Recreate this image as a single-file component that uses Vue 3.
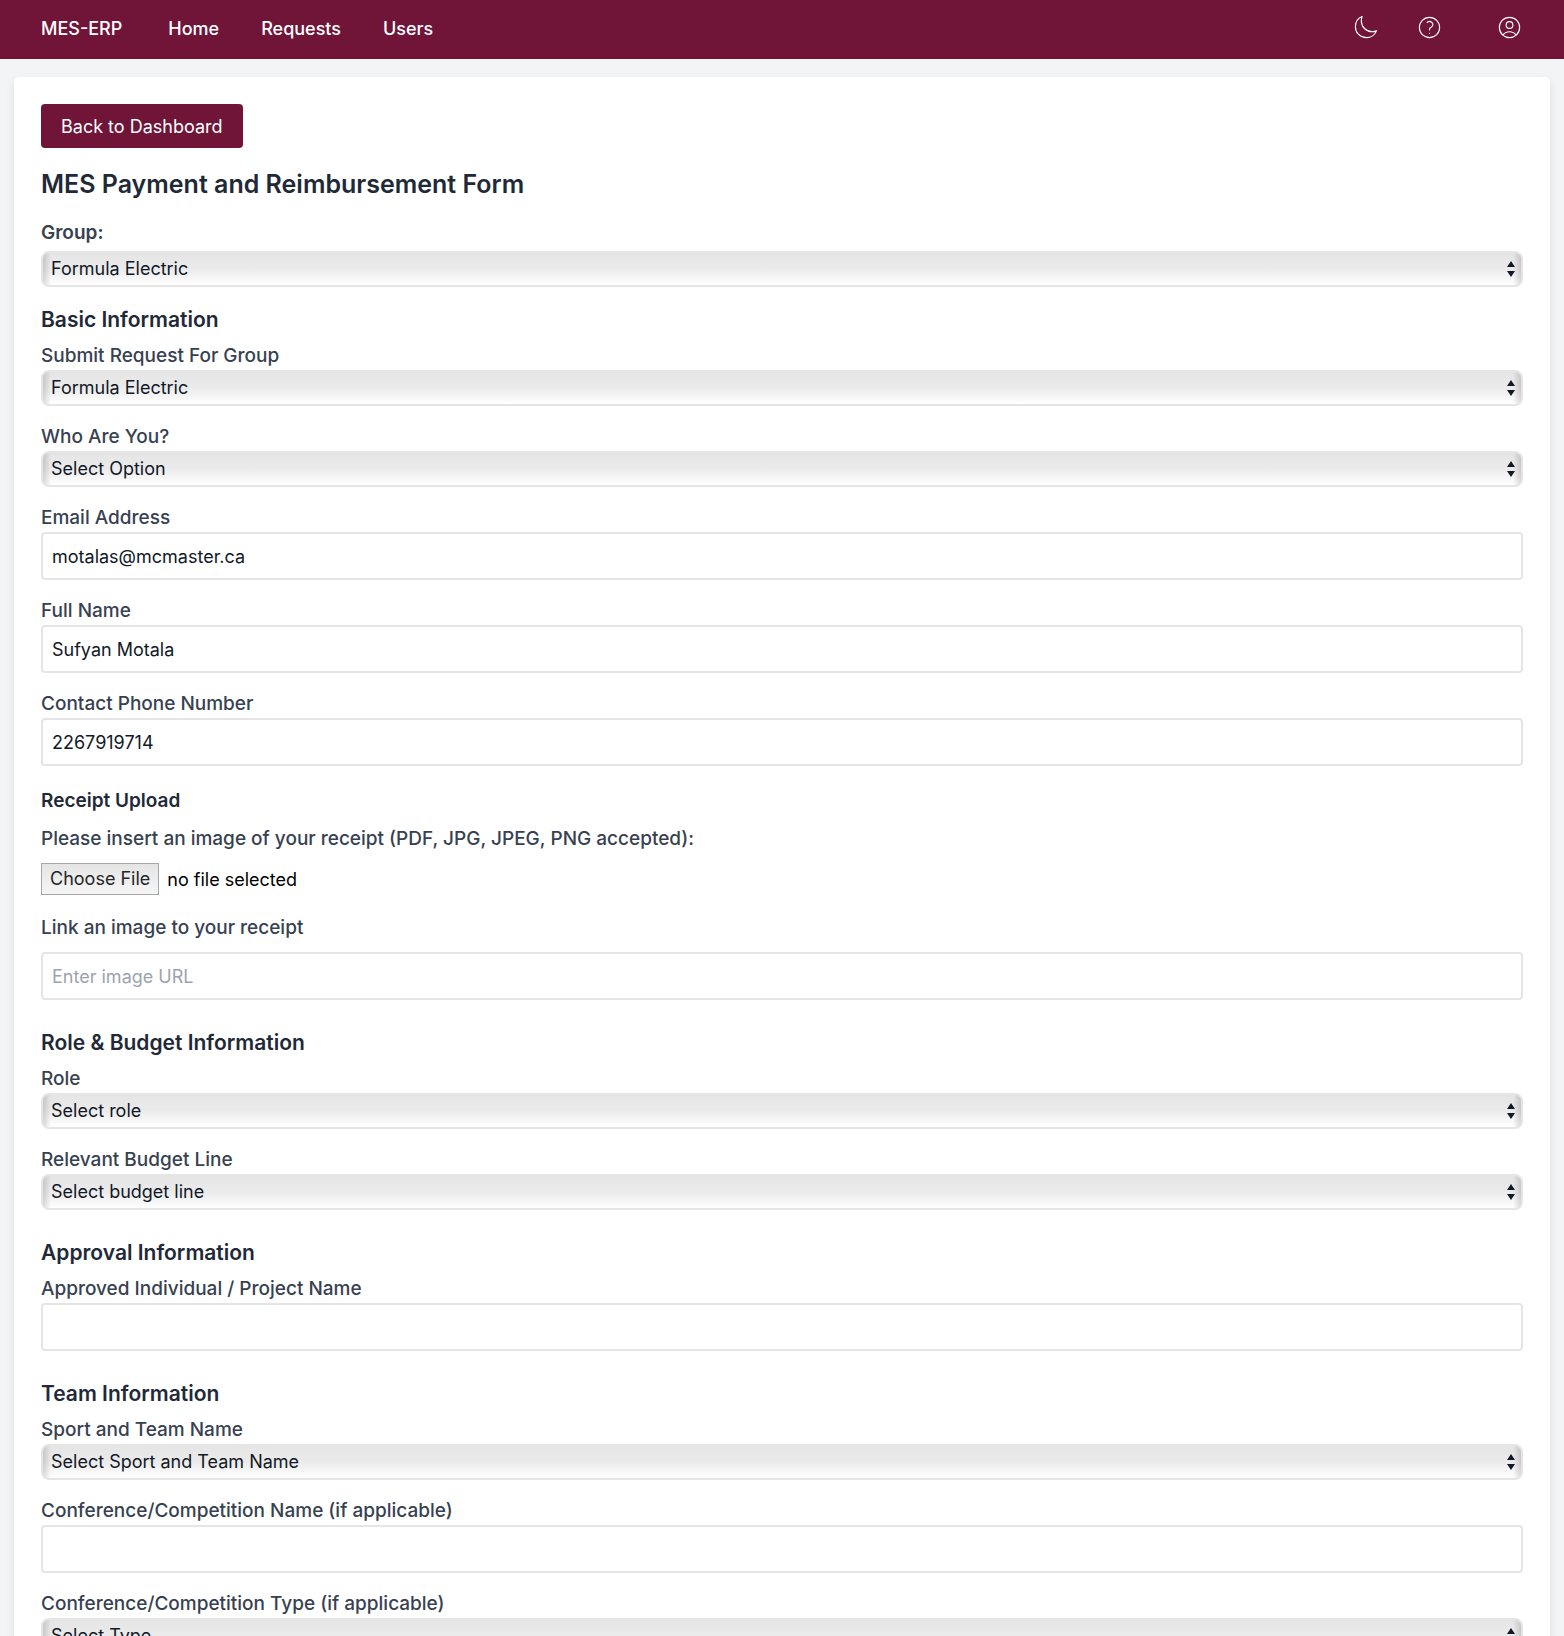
<script setup>
import { reactive } from 'vue'

const form = reactive({
  group: 'Formula Electric',
  email: 'motalas@mcmaster.ca',
  name: 'Sufyan Motala',
  phone: '2267919714',
  receiptUrl: '',
  project: '',
  conference: ''
})

const links = ['Home', 'Requests', 'Users']

const basicSelects = [
  { id: 'submit-group', label: 'Submit Request For Group', option: 'Formula Electric' },
  { id: 'who', label: 'Who Are You?', option: 'Select Option' }
]
const basicInputs = [
  { id: 'email', label: 'Email Address', type: 'email' },
  { id: 'name', label: 'Full Name', type: 'text' },
  { id: 'phone', label: 'Contact Phone Number', type: 'tel' }
]
const budgetSelects = [
  { id: 'role', label: 'Role', option: 'Select role' },
  { id: 'budget-line', label: 'Relevant Budget Line', option: 'Select budget line' }
]
</script>

<template>
  <div class="page">
    <header class="navbar">
      <nav class="nav-links">
        <a class="brand" href="#">MES-ERP</a>
        <a v-for="link in links" :key="link" href="#">{{ link }}</a>
      </nav>
      <div class="nav-actions">
        <button type="button" aria-label="Toggle dark mode">
          <svg viewBox="0 0 24 24"><path d="M21.752 15.002A9.718 9.718 0 0 1 18 15.75c-5.385 0-9.75-4.365-9.75-9.75 0-1.33.266-2.597.748-3.752A9.753 9.753 0 0 0 3 11.25C3 16.635 7.365 21 12.75 21a9.753 9.753 0 0 0 9.002-5.998Z" /></svg>
        </button>
        <button type="button" aria-label="Help">
          <svg viewBox="0 0 24 24"><path d="M9.879 7.519c1.171-1.025 3.071-1.025 4.242 0 1.172 1.025 1.172 2.687 0 3.712-.203.179-.43.326-.67.442-.745.361-1.45.999-1.45 1.827v.75M21 12a9 9 0 1 1-18 0 9 9 0 0 1 18 0Zm-9 5.25h.008v.008H12v-.008Z" /></svg>
        </button>
        <button class="account" type="button" aria-label="Account">
          <svg viewBox="0 0 24 24"><path d="M17.982 18.725A7.488 7.488 0 0 0 12 15.75a7.488 7.488 0 0 0-5.982 2.975m11.963 0a9 9 0 1 0-11.963 0m11.963 0A8.966 8.966 0 0 1 12 21a8.966 8.966 0 0 1-5.982-2.275M15 9.75a3 3 0 1 1-6 0 3 3 0 0 1 6 0Z" /></svg>
        </button>
      </div>
    </header>

    <main class="card">
      <button class="back" type="button">Back to Dashboard</button>
      <h1>MES Payment and Reimbursement Form</h1>

      <form>
        <div class="group-field">
          <label for="group">Group:</label>
          <div class="select">
            <select id="group" v-model="form.group"><option>Formula Electric</option></select>
            <svg viewBox="0 0 8 16"><path d="M4 0l4 6H0zM4 16l4-6H0z" /></svg>
          </div>
        </div>

        <section class="first">
          <h2>Basic Information</h2>
          <div class="fields">
            <div v-for="field in basicSelects" :key="field.id">
              <label :for="field.id">{{ field.label }}</label>
              <div class="select">
                <select :id="field.id"><option>{{ field.option }}</option></select>
                <svg viewBox="0 0 8 16"><path d="M4 0l4 6H0zM4 16l4-6H0z" /></svg>
              </div>
            </div>
            <div v-for="field in basicInputs" :key="field.id">
              <label :for="field.id">{{ field.label }}</label>
              <input :id="field.id" v-model="form[field.id]" class="text" :type="field.type" />
            </div>
          </div>
        </section>

        <section class="receipt">
          <h3>Receipt Upload</h3>
          <label for="receipt-file">Please insert an image of your receipt (PDF, JPG, JPEG, PNG accepted):</label>
          <label class="file">
            <input id="receipt-file" type="file" accept=".pdf,.jpg,.jpeg,.png" />
            <span class="choose">Choose File</span>
            <span>no file selected</span>
          </label>
          <label class="link-label" for="receipt-url">Link an image to your receipt</label>
          <input id="receipt-url" v-model="form.receiptUrl" class="text" type="url" placeholder="Enter image URL" />
        </section>

        <section>
          <h2>Role &amp; Budget Information</h2>
          <div class="fields">
            <div v-for="field in budgetSelects" :key="field.id">
              <label :for="field.id">{{ field.label }}</label>
              <div class="select">
                <select :id="field.id"><option>{{ field.option }}</option></select>
                <svg viewBox="0 0 8 16"><path d="M4 0l4 6H0zM4 16l4-6H0z" /></svg>
              </div>
            </div>
          </div>
        </section>

        <section>
          <h2>Approval Information</h2>
          <label for="project">Approved Individual / Project Name</label>
          <input id="project" v-model="form.project" class="text" type="text" />
        </section>

        <section>
          <h2>Team Information</h2>
          <div class="fields">
            <div>
              <label for="team">Sport and Team Name</label>
              <div class="select">
                <select id="team"><option>Select Sport and Team Name</option></select>
                <svg viewBox="0 0 8 16"><path d="M4 0l4 6H0zM4 16l4-6H0z" /></svg>
              </div>
            </div>
            <div>
              <label for="conference">Conference/Competition Name (if applicable)</label>
              <input id="conference" v-model="form.conference" class="text" type="text" />
            </div>
            <div>
              <label for="conference-type">Conference/Competition Type (if applicable)</label>
              <div class="select">
                <select id="conference-type"><option>Select Type</option></select>
                <svg viewBox="0 0 8 16"><path d="M4 0l4 6H0zM4 16l4-6H0z" /></svg>
              </div>
            </div>
          </div>
        </section>
      </form>
    </main>
  </div>
</template>

<style>
body {
  margin: 0;
  background: #f3f4f6;
}
</style>

<style scoped>
.page,
.page * {
  box-sizing: border-box;
}
.page {
  height: 100vh;
  overflow-y: auto;
  scrollbar-width: none;
  background: #f3f4f6;
  color: #111827;
  font: 400 18px/27px Inter, "Liberation Sans", sans-serif;
}
button,
input,
select {
  font: inherit;
}
.navbar {
  display: flex;
  justify-content: space-between;
  align-items: center;
  height: 59px;
  padding: 0 41px 2px;
  background: #701538;
}
.nav-links {
  display: flex;
  gap: 42px;
}
.nav-links a {
  color: #fff;
  font-weight: 500;
  text-decoration: none;
}
.nav-links .brand {
  margin-right: 4px;
}
.nav-actions {
  display: flex;
  gap: 37px;
  padding-bottom: 2px;
}
.nav-actions button {
  display: flex;
  padding: 0;
  border: 0;
  background: none;
}
.nav-actions .account {
  margin-left: 16px;
}
.nav-actions svg {
  width: 27px;
  height: 27px;
  fill: none;
  stroke: #fff;
  stroke-width: 1;
  stroke-linecap: round;
  stroke-linejoin: round;
}
.card {
  margin: 18px 14px;
  padding: 27px;
  border-radius: 5px;
  background: #fff;
  box-shadow: 0 4px 8px rgba(0, 0, 0, 0.1);
}
.back {
  display: block;
  height: 44px;
  padding: 0 20px;
  border: 0;
  border-radius: 4px;
  background: #701538;
  color: #fff;
}
h1,
h2,
h3 {
  margin: 0;
  color: #1f2937;
}
h1 {
  margin: 20px 0;
  font-size: 25px;
  font-weight: 600;
  line-height: 32px;
}
h2 {
  margin-bottom: 8px;
  font-size: 21px;
  font-weight: 600;
  line-height: 30px;
}
h3 {
  font-size: 19px;
  font-weight: 600;
  line-height: 27px;
}
label {
  display: block;
  padding-bottom: 2px;
  color: #374151;
  font-size: 19px;
  font-weight: 500;
  line-height: 25px;
}
.group-field label {
  margin-bottom: 4px;
  font-weight: 600;
}
.group-field select {
  color: #000;
}
section {
  margin-top: 28px;
}
section.first {
  margin-top: 18px;
}
.fields {
  display: flex;
  flex-direction: column;
  gap: 18px;
}
.select {
  position: relative;
}
.select select {
  display: block;
  width: 100%;
  height: 36px;
  padding: 0 28px 2px 8px;
  border: 2px solid #e5e5e5;
  border-radius: 8px;
  appearance: none;
  background:
    linear-gradient(to right, rgba(0, 0, 0, 0.14), transparent 8px),
    linear-gradient(to left, rgba(0, 0, 0, 0.14), transparent 8px),
    linear-gradient(#e5e5e5, #ebebeb 50%, #fff);
  color: #111827;
}
.select svg {
  position: absolute;
  top: 10px;
  right: 8px;
  width: 8px;
  height: 16px;
  fill: #111827;
  pointer-events: none;
}
.text {
  display: block;
  width: 100%;
  height: 48px;
  padding: 0 9px;
  border: 2px solid #e5e5e5;
  border-radius: 4px;
  background: #fff;
  color: #111827;
}
.text::placeholder {
  color: #9ca3af;
  opacity: 1;
}
.receipt {
  margin-top: 21px;
}
.receipt h3 {
  margin-bottom: 12px;
}
.file {
  display: flex;
  align-items: center;
  gap: 8px;
  margin: 10px 0 20px;
  padding: 0;
  color: #000;
  font-size: 18px;
  font-weight: 400;
}
.file input {
  position: absolute;
  width: 1px;
  height: 1px;
  opacity: 0;
}
.choose {
  height: 32px;
  padding: 0 8px;
  border: 1px solid #a6a6a6;
  background: linear-gradient(#e4e4e4, #f6f6f6);
  color: #262626;
  line-height: 30px;
}
.link-label {
  margin-bottom: 10px;
}
</style>
